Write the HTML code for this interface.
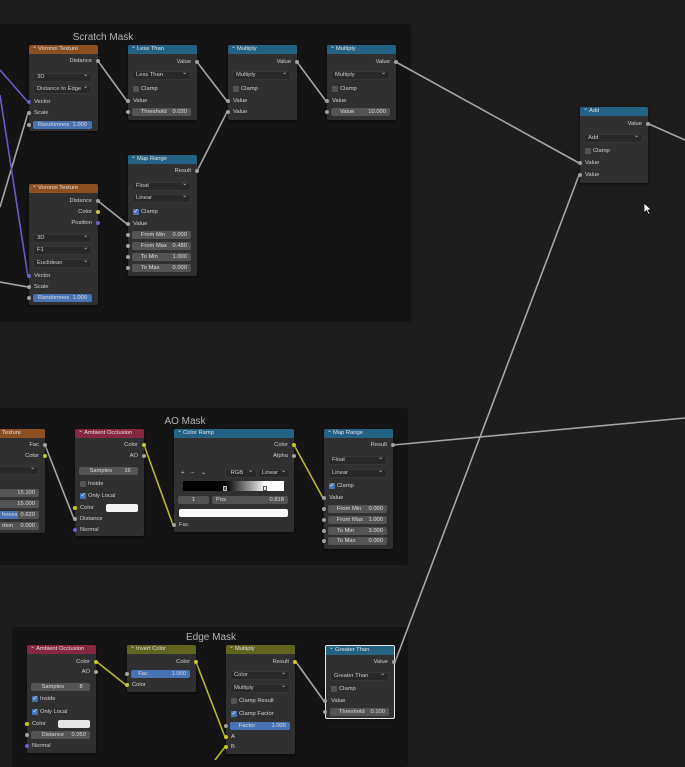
<!DOCTYPE html>
<html><head><meta charset="utf-8"><style>
*{box-sizing:border-box;margin:0;padding:0}
body{width:685px;height:760px;background:#1d1d1d;position:relative;overflow:hidden;font-family:"Liberation Sans",sans-serif;font-size:5.8px;color:#d0d0d0}
.fr{position:absolute;background:#141414;border-radius:3px}
.ft{position:absolute;font-size:10px;color:#b4b4b4;width:120px;text-align:center}
.n{position:absolute;background:#303030;border-radius:2px;box-shadow:0 1px 3px rgba(0,0,0,.6)}
.h{position:absolute;left:0;top:0;right:0;height:9px;border-radius:2px 2px 0 0;padding-left:9px;line-height:9px;color:#e0e0e0;font-size:5.8px}
.h:before{content:"⌄";position:absolute;left:3px;top:-2px;font-size:6px}
.o{background:#8c4f20}.b{background:#246283}.r{background:#85283f}.y{background:#61641f}
.l{position:absolute;line-height:8px;height:8px;white-space:nowrap}
.rt{text-align:right}
.s{position:absolute;width:4px;height:4px;border-radius:50%;background:#a1a1a1}
.sy{background:#c8c829}.sp{background:#6464c8}
.dd{position:absolute;height:9px;background:#282828;border:1px solid #363636;border-radius:2px;line-height:7px;padding-left:3px;color:#ccc}
.dd:after{content:"⌄";position:absolute;right:3px;top:-2px}
.f{position:absolute;height:8px;background:#545454;border-radius:2px;line-height:8px;padding:0 4px;color:#ddd;white-space:nowrap;overflow:hidden}
.f i{font-style:normal;float:right}
.fb{background:#4772b3}
.cb{position:absolute;width:6px;height:6px;background:#545454;border-radius:1px}
.cc{background:#4772b3}
.cc:after{content:"✓";position:absolute;left:0.5px;top:-1.5px;color:#fff;font-size:6px}
</style></head><body>

<div class="fr" style="left:-5px;top:24px;width:416px;height:298px"></div>
<div class="ft" style="left:43px;top:32px">Scratch Mask</div>
<div class="fr" style="left:-5px;top:408px;width:413px;height:157px"></div>
<div class="ft" style="left:125px;top:416px">AO Mask</div>
<div class="fr" style="left:12px;top:627px;width:396px;height:140px"></div>
<div class="ft" style="left:151px;top:632px">Edge Mask</div>

<svg width="685" height="760" style="position:absolute;left:0;top:0;z-index:1" fill="none" stroke-width="1.6">
<g stroke="#a6a6a6">
<path d="M396 62 L579 163"/><path d="M649 124 L685 140"/><path d="M395 662 L579 175"/><path d="M393 445 L685 418"/>
<path d="M98 61 L127 101"/><path d="M197 62 L227 101"/><path d="M297 62 L326 101"/><path d="M197 171 L227 112"/><path d="M98 201 L127 224"/>
<path d="M0 207 L28 113"/><path d="M0 282 L28 287"/>
<path d="M45 445 L74 519"/><path d="M296 662 L324 701"/>
</g>
<g stroke="#6a5ac8"><path d="M0 70 L28 102"/><path d="M0 95 L28 277"/></g>
<g stroke="#b8b830"><path d="M144 445 L173 525"/><path d="M294 445 L323 498"/><path d="M97 662 L126 685"/><path d="M196 662 L225 737"/><path d="M215 760 L225 747"/></g>
</svg>

<div style="position:relative;z-index:2">
<div class="n" style="left:29px;top:45px;width:69px;height:86px">
<div class="h o">Voronoi Texture</div>
<div class="l rt" style="right:6px;top:12px">Distance</div><div class="s" style="left:67px;top:14px"></div>
<div class="dd" style="left:4px;top:28px;width:59px">3D</div>
<div class="dd" style="left:4px;top:40px;width:59px">Distance to Edge</div>
<div class="l" style="left:5px;top:53px">Vector</div><div class="s sp" style="left:-2px;top:55px"></div>
<div class="l" style="left:5px;top:64px">Scale</div><div class="s" style="left:-2px;top:66px"></div>
<div class="f fb" style="left:4px;top:76px;width:59px;text-align:center">Randomnes&nbsp;&nbsp;1.000</div><div class="s" style="left:-2px;top:78px"></div>
</div>
<div class="n" style="left:128px;top:45px;width:69px;height:75px">
<div class="h b">Less Than</div>
<div class="l rt" style="right:6px;top:13px">Value</div><div class="s" style="left:67px;top:15px"></div>
<div class="dd" style="left:4px;top:26px;width:59px">Less Than</div>
<div class="cb" style="left:5px;top:41px"></div><div class="l" style="left:13px;top:40px">Clamp</div>
<div class="l" style="left:5px;top:52px">Value</div><div class="s" style="left:-2px;top:54px"></div>
<div class="f" style="left:4px;top:63px;width:59px">&nbsp;&nbsp;&nbsp;Threshold<i>0.030</i></div><div class="s" style="left:-2px;top:65px"></div>
</div>
<div class="n" style="left:228px;top:45px;width:69px;height:75px">
<div class="h b">Multiply</div>
<div class="l rt" style="right:6px;top:13px">Value</div><div class="s" style="left:67px;top:15px"></div>
<div class="dd" style="left:4px;top:26px;width:59px">Multiply</div>
<div class="cb" style="left:5px;top:41px"></div><div class="l" style="left:13px;top:40px">Clamp</div>
<div class="l" style="left:5px;top:52px">Value</div><div class="s" style="left:-2px;top:54px"></div>
<div class="l" style="left:5px;top:63px">Value</div><div class="s" style="left:-2px;top:65px"></div>
</div>
<div class="n" style="left:327px;top:45px;width:69px;height:75px">
<div class="h b">Multiply</div>
<div class="l rt" style="right:6px;top:13px">Value</div><div class="s" style="left:67px;top:15px"></div>
<div class="dd" style="left:4px;top:26px;width:59px">Multiply</div>
<div class="cb" style="left:5px;top:41px"></div><div class="l" style="left:13px;top:40px">Clamp</div>
<div class="l" style="left:5px;top:52px">Value</div><div class="s" style="left:-2px;top:54px"></div>
<div class="f" style="left:4px;top:63px;width:59px">&nbsp;&nbsp;&nbsp;Value<i>10.000</i></div><div class="s" style="left:-2px;top:65px"></div>
</div>
<div class="n" style="left:128px;top:155px;width:69px;height:121px">
<div class="h b">Map Range</div>
<div class="l rt" style="right:6px;top:12px">Result</div><div class="s" style="left:67px;top:14px"></div>
<div class="dd" style="left:4px;top:27px;width:59px">Float</div>
<div class="dd" style="left:4px;top:39px;width:59px">Linear</div>
<div class="cb cc" style="left:5px;top:54px"></div><div class="l" style="left:13px;top:53px">Clamp</div>
<div class="l" style="left:5px;top:65px">Value</div><div class="s" style="left:-2px;top:67px"></div>
<div class="f" style="left:4px;top:76px;width:59px">&nbsp;&nbsp;&nbsp;From Min<i>0.000</i></div><div class="s" style="left:-2px;top:78px"></div>
<div class="f" style="left:4px;top:87px;width:59px">&nbsp;&nbsp;&nbsp;From Max<i>0.480</i></div><div class="s" style="left:-2px;top:89px"></div>
<div class="f" style="left:4px;top:98px;width:59px">&nbsp;&nbsp;&nbsp;To Min<i>1.000</i></div><div class="s" style="left:-2px;top:100px"></div>
<div class="f" style="left:4px;top:109px;width:59px">&nbsp;&nbsp;&nbsp;To Max<i>0.000</i></div><div class="s" style="left:-2px;top:111px"></div>
</div>
<div class="n" style="left:29px;top:184px;width:69px;height:121px">
<div class="h o">Voronoi Texture</div>
<div class="l rt" style="right:6px;top:13px">Distance</div><div class="s" style="left:67px;top:15px"></div>
<div class="l rt" style="right:6px;top:24px">Color</div><div class="s sy" style="left:67px;top:26px"></div>
<div class="l rt" style="right:6px;top:35px">Position</div><div class="s sp" style="left:67px;top:37px"></div>
<div class="dd" style="left:4px;top:50px;width:59px">3D</div>
<div class="dd" style="left:4px;top:62px;width:59px">F1</div>
<div class="dd" style="left:4px;top:75px;width:59px">Euclidean</div>
<div class="l" style="left:5px;top:88px">Vector</div><div class="s sp" style="left:-2px;top:90px"></div>
<div class="l" style="left:5px;top:99px">Scale</div><div class="s" style="left:-2px;top:101px"></div>
<div class="f fb" style="left:4px;top:110px;width:59px;text-align:center">Randomnes&nbsp;&nbsp;1.000</div><div class="s" style="left:-2px;top:112px"></div>
</div>

<div class="n" style="left:-30px;top:429px;width:75px;height:104px">
<div class="h o" style="padding-left:32px">Texture</div>
<div class="l rt" style="right:6px;top:12px">Fac</div><div class="s" style="left:73px;top:14px"></div>
<div class="l rt" style="right:6px;top:23px">Color</div><div class="s sy" style="left:73px;top:25px"></div>
<div class="dd" style="left:4px;top:37px;width:65px"></div>
<div class="f" style="left:4px;top:60px;width:65px"><i>15.100</i></div>
<div class="f" style="left:4px;top:71px;width:65px"><i>15.000</i></div>
<div class="f" style="left:4px;top:82px;width:65px;background:linear-gradient(90deg,#4772b3 68%,#545454 68%)"><span style="position:absolute;left:28px">hness</span><i>0.620</i></div>
<div class="f" style="left:4px;top:93px;width:65px"><span style="position:absolute;left:28px">rtion</span><i>0.000</i></div>
</div>
<div class="n" style="left:75px;top:429px;width:69px;height:107px">
<div class="h r">Ambient Occlusion</div>
<div class="l rt" style="right:6px;top:12px">Color</div><div class="s sy" style="left:67px;top:14px"></div>
<div class="l rt" style="right:6px;top:23px">AO</div><div class="s" style="left:67px;top:25px"></div>
<div class="f" style="left:4px;top:38px;width:59px">&nbsp;&nbsp;&nbsp;&nbsp;Samples<i>16&nbsp;&nbsp;</i></div>
<div class="cb" style="left:5px;top:52px"></div><div class="l" style="left:13px;top:51px">Inside</div>
<div class="cb cc" style="left:5px;top:64px"></div><div class="l" style="left:13px;top:63px">Only Local</div>
<div class="l" style="left:5px;top:75px">Color</div><div class="s sy" style="left:-2px;top:77px"></div>
<div style="position:absolute;left:31px;top:75px;width:32px;height:8px;background:#f4f4f4;border-radius:2px"></div>
<div class="l" style="left:5px;top:86px">Distance</div><div class="s" style="left:-2px;top:88px"></div>
<div class="l" style="left:5px;top:97px">Normal</div><div class="s sp" style="left:-2px;top:99px"></div>
</div>
<div class="n" style="left:174px;top:429px;width:120px;height:103px">
<div class="h b">Color Ramp</div>
<div class="l rt" style="right:6px;top:12px">Color</div><div class="s sy" style="left:118px;top:14px"></div>
<div class="l rt" style="right:6px;top:23px">Alpha</div><div class="s" style="left:118px;top:25px"></div>
<div class="l" style="left:7px;top:40px;word-spacing:5px">+ − ⌄</div>
<div class="dd" style="left:51px;top:40px;width:32px">&nbsp;RGB</div>
<div class="dd" style="left:84px;top:40px;width:32px">Linear</div>
<div style="position:absolute;left:9px;top:52px;width:101px;height:10px;background:linear-gradient(90deg,#000 42%,#fff 82%)"></div>
<div style="position:absolute;left:49px;top:57px;width:4px;height:5px;background:#555;border:1px solid #bbb"></div>
<div style="position:absolute;left:89px;top:57px;width:4px;height:5px;background:#eee;border:1px solid #555"></div>
<div class="f" style="left:4px;top:67px;width:31px;text-align:center">1</div>
<div class="f" style="left:38px;top:67px;width:76px">Pos<i>0.818</i></div>
<div style="position:absolute;left:5px;top:80px;width:109px;height:8px;background:#fafafa;border-radius:2px"></div>
<div class="l" style="left:5px;top:92px">Fac</div><div class="s" style="left:-2px;top:94px"></div>
</div>
<div class="n" style="left:324px;top:429px;width:69px;height:120px">
<div class="h b">Map Range</div>
<div class="l rt" style="right:6px;top:12px">Result</div><div class="s" style="left:67px;top:14px"></div>
<div class="dd" style="left:4px;top:27px;width:59px">Float</div>
<div class="dd" style="left:4px;top:40px;width:59px">Linear</div>
<div class="cb cc" style="left:5px;top:54px"></div><div class="l" style="left:13px;top:53px">Clamp</div>
<div class="l" style="left:5px;top:65px">Value</div><div class="s" style="left:-2px;top:67px"></div>
<div class="f" style="left:4px;top:76px;width:59px">&nbsp;&nbsp;&nbsp;From Min<i>0.000</i></div><div class="s" style="left:-2px;top:78px"></div>
<div class="f" style="left:4px;top:87px;width:59px">&nbsp;&nbsp;&nbsp;From Max<i>1.000</i></div><div class="s" style="left:-2px;top:89px"></div>
<div class="f" style="left:4px;top:98px;width:59px">&nbsp;&nbsp;&nbsp;To Min<i>3.000</i></div><div class="s" style="left:-2px;top:100px"></div>
<div class="f" style="left:4px;top:108px;width:59px">&nbsp;&nbsp;&nbsp;To Max<i>0.000</i></div><div class="s" style="left:-2px;top:110px"></div>
</div>

<div class="n" style="left:27px;top:645px;width:69px;height:108px">
<div class="h r">Ambient Occlusion</div>
<div class="l rt" style="right:6px;top:13px">Color</div><div class="s sy" style="left:67px;top:15px"></div>
<div class="l rt" style="right:6px;top:23px">AO</div><div class="s" style="left:67px;top:25px"></div>
<div class="f" style="left:4px;top:38px;width:59px">&nbsp;&nbsp;&nbsp;&nbsp;Samples<i>8&nbsp;&nbsp;</i></div>
<div class="cb cc" style="left:5px;top:51px"></div><div class="l" style="left:13px;top:50px">Inside</div>
<div class="cb cc" style="left:5px;top:64px"></div><div class="l" style="left:13px;top:63px">Only Local</div>
<div class="l" style="left:5px;top:75px">Color</div><div class="s sy" style="left:-2px;top:77px"></div>
<div style="position:absolute;left:31px;top:75px;width:32px;height:8px;background:#e6e6e6;border-radius:2px"></div>
<div class="f" style="left:4px;top:86px;width:59px">&nbsp;&nbsp;&nbsp;&nbsp;Distance<i>0.050</i></div><div class="s" style="left:-2px;top:88px"></div>
<div class="l" style="left:5px;top:97px">Normal</div><div class="s sp" style="left:-2px;top:99px"></div>
</div>
<div class="n" style="left:127px;top:645px;width:69px;height:47px">
<div class="h y">Invert Color</div>
<div class="l rt" style="right:6px;top:13px">Color</div><div class="s sy" style="left:67px;top:15px"></div>
<div class="f fb" style="left:4px;top:25px;width:59px">&nbsp;&nbsp;Fac<i>1.000</i></div><div class="s" style="left:-2px;top:27px"></div>
<div class="l" style="left:5px;top:36px">Color</div><div class="s sy" style="left:-2px;top:38px"></div>
</div>
<div class="n" style="left:226px;top:645px;width:69px;height:109px">
<div class="h y">Multiply</div>
<div class="l rt" style="right:6px;top:13px">Result</div><div class="s sy" style="left:67px;top:15px"></div>
<div class="dd" style="left:4px;top:26px;width:60px">Color</div>
<div class="dd" style="left:4px;top:39px;width:60px">Multiply</div>
<div class="cb" style="left:5px;top:53px"></div><div class="l" style="left:13px;top:52px">Clamp Result</div>
<div class="cb cc" style="left:5px;top:66px"></div><div class="l" style="left:13px;top:65px">Clamp Factor</div>
<div class="f fb" style="left:4px;top:77px;width:60px">&nbsp;&nbsp;&nbsp;Factor<i>1.000</i></div><div class="s" style="left:-2px;top:79px"></div>
<div class="l" style="left:5px;top:88px">A</div><div class="s sy" style="left:-2px;top:90px"></div>
<div class="l" style="left:5px;top:98px">B</div><div class="s sy" style="left:-2px;top:100px"></div>
</div>
<div class="n" style="left:325px;top:645px;width:70px;height:74px;border:1px solid #e8e8e8">
<div class="h b">Greater Than</div>
<div class="l rt" style="right:6px;top:12px">Value</div><div class="s" style="left:66px;top:14px"></div>
<div class="dd" style="left:4px;top:26px;width:59px">Greater Than</div>
<div class="cb" style="left:5px;top:40px"></div><div class="l" style="left:13px;top:39px">Clamp</div>
<div class="l" style="left:5px;top:51px">Value</div><div class="s" style="left:-3px;top:53px"></div>
<div class="f" style="left:4px;top:62px;width:59px">&nbsp;&nbsp;&nbsp;Threshold<i>0.100</i></div><div class="s" style="left:-3px;top:64px"></div>
</div>
<div class="n" style="left:580px;top:107px;width:68px;height:76px">
<div class="h b">Add</div>
<div class="l rt" style="right:6px;top:13px">Value</div><div class="s" style="left:66px;top:15px"></div>
<div class="dd" style="left:4px;top:27px;width:59px">Add</div>
<div class="cb" style="left:5px;top:41px"></div><div class="l" style="left:13px;top:40px">Clamp</div>
<div class="l" style="left:5px;top:52px">Value</div><div class="s" style="left:-2px;top:54px"></div>
<div class="l" style="left:5px;top:64px">Value</div><div class="s" style="left:-2px;top:66px"></div>
</div>
<svg style="position:absolute;left:643px;top:202px" width="10" height="14"><path d="M1 1 L1 11 L3.5 8.5 L5.5 12.5 L7 11.8 L5 8 L8.5 8 Z" fill="#fff" stroke="#000" stroke-width="0.7"/></svg>
</div>
</body></html>
